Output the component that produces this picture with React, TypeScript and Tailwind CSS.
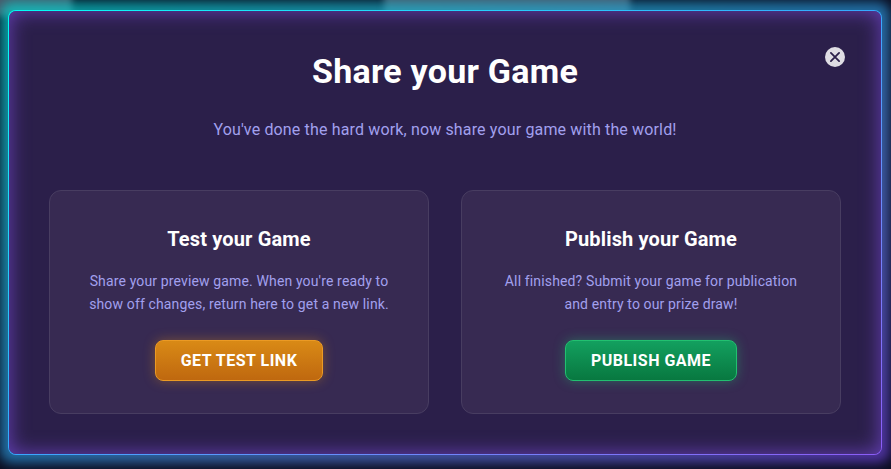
import type { ReactNode } from "react";

type ShareCardProps = {
  title: string;
  lines: string[];
  action: ReactNode;
};

const buttonBase =
  "h-[41px] rounded-lg border px-[25px] text-base font-bold leading-none tracking-[0.5px] text-white uppercase";

function ShareCard({ title, lines, action }: ShareCardProps) {
  return (
    <section className="flex h-[224px] flex-1 flex-col items-center rounded-xl border border-[#483d61] bg-[#372a52] pt-[34px] text-center">
      <h2 className="text-xl leading-7 font-bold tracking-[0.15px] text-white">
        {title}
      </h2>
      <p className="mt-[17px] text-sm leading-[23px] tracking-[0.14px] text-[#a2a0ee]">
        {lines.map((line) => (
          <span key={line} className="block">
            {line}
          </span>
        ))}
      </p>
      <div className="mt-[24px]">{action}</div>
    </section>
  );
}

export default function App() {
  return (
    <div className="relative h-[469px] w-[891px] overflow-hidden bg-[#0b0d20] pt-[10px] pl-2 font-['Roboto',sans-serif]">
      {/* Page behind the dialog */}
      <div className="absolute top-[-8px] left-[-8px] h-[24px] w-[80px] bg-[#4a5668] blur-[3px]" />
      <div className="absolute top-[-8px] left-[384px] h-[24px] w-[246px] bg-[#4a5668] blur-[3px]" />

      <div className="relative h-[445px] w-[874px]">
        {/* Outer glow */}
        <div className="absolute inset-[-8px] rounded-xl bg-linear-to-br from-[#00d8d0] via-[#2a94d8] to-[#6a3fd0] opacity-70 blur-[6px]" />

        <div className="relative h-full rounded-lg bg-linear-to-br from-[#00fff5] via-[#36a8ff] to-[#8b5cf6] p-px">
          <div
            role="dialog"
            aria-labelledby="share-title"
            className="relative h-full rounded-[7px] bg-[#2b1f4a] px-10 pt-[38px] shadow-[inset_0_0_20px_#6640b8]"
          >
            <button
              aria-label="Close"
              className="absolute top-[36px] right-[36px] flex size-5 items-center justify-center rounded-full bg-[#dfdde4]"
            >
              <svg
                viewBox="0 0 20 20"
                className="size-5"
                fill="none"
                stroke="#2b1f4a"
                strokeWidth="1.8"
                strokeLinecap="round"
              >
                <path d="M5.9 5.9l8.2 8.2M14.1 5.9l-8.2 8.2" />
              </svg>
            </button>

            <header className="text-center">
              <h1
                id="share-title"
                className="text-[34px] leading-[44px] font-bold tracking-[0.25px] text-white"
              >
                Share your Game
              </h1>
              <p className="mt-[25px] text-base leading-6 tracking-[0.15px] text-[#a2a0ee]">
                You've done the hard work, now share your game with the world!
              </p>
            </header>

            <div className="mt-[48px] flex gap-8">
              <ShareCard
                title="Test your Game"
                lines={[
                  "Share your preview game. When you're ready to",
                  "show off changes, return here to get a new link.",
                ]}
                action={
                  <button
                    className={`${buttonBase} border-[#eb9a24] bg-linear-to-b from-[#d98a16] to-[#bf680f] shadow-[0_0_12px_rgba(217,138,22,0.4)]`}
                  >
                    Get test link
                  </button>
                }
              />
              <ShareCard
                title="Publish your Game"
                lines={[
                  "All finished? Submit your game for publication",
                  "and entry to our prize draw!",
                ]}
                action={
                  <button
                    className={`${buttonBase} border-[#22c070] bg-linear-to-b from-[#13a05f] to-[#087840] shadow-[0_0_12px_rgba(34,192,112,0.4)]`}
                  >
                    Publish game
                  </button>
                }
              />
            </div>
          </div>
        </div>
      </div>
    </div>
  );
}
